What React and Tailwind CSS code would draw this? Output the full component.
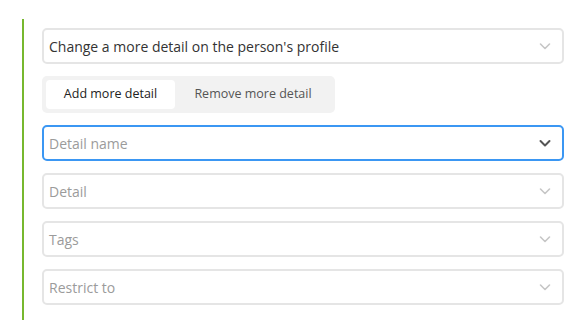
import React from "react";

function Chevron({ dark }) {
  return (
    <svg width="14" height="14" viewBox="0 0 14 14" fill="none" className="shrink-0">
      <path
        d="M2.5 5 L7 9.5 L11.5 5"
        stroke={dark ? "#555555" : "#c6c6c6"}
        strokeWidth={dark ? 2 : 1.6}
        strokeLinecap="round"
        strokeLinejoin="round"
      />
    </svg>
  );
}

function Select({ text, placeholder, focused }) {
  return (
    <div
      className={
        "flex h-[36px] items-center justify-between rounded-[5px] border-2 pl-[5px] pr-[10px] " +
        (focused ? "border-[#3b97f3]" : "border-[#e5e5e5]")
      }
    >
      <span className={"text-[14px] " + (placeholder ? "text-[#9b9b9b]" : "text-[#333333]")}>
        {text}
      </span>
      <Chevron dark={focused} />
    </div>
  );
}

export default function App() {
  return (
    <div
      className="h-[336px] w-[586px] bg-white pt-[19px]"
      style={{ fontFamily: '"Open Sans", "Noto Sans", sans-serif' }}
    >
      <div className="ml-[22px] mr-[22px] flex flex-col gap-[12px] border-l-2 border-[#77b82f] pb-[15px] pl-[18px] pt-[9px]">
        <Select text="Change a more detail on the person's profile" />
        <div className="flex h-[37px] w-[293px] items-center rounded-[5px] bg-[#f2f2f2] p-[4px]">
          <div className="flex h-[29px] w-[129px] items-center justify-center rounded-[4px] bg-white text-[12.5px] text-[#222222]">
            Add more detail
          </div>
          <div className="flex h-[29px] flex-1 items-center justify-center text-[12.5px] text-[#555555]">
            Remove more detail
          </div>
        </div>
        <Select text="Detail name" placeholder focused />
        <Select text="Detail" placeholder />
        <Select text="Tags" placeholder />
        <Select text="Restrict to" placeholder />
      </div>
    </div>
  );
}
